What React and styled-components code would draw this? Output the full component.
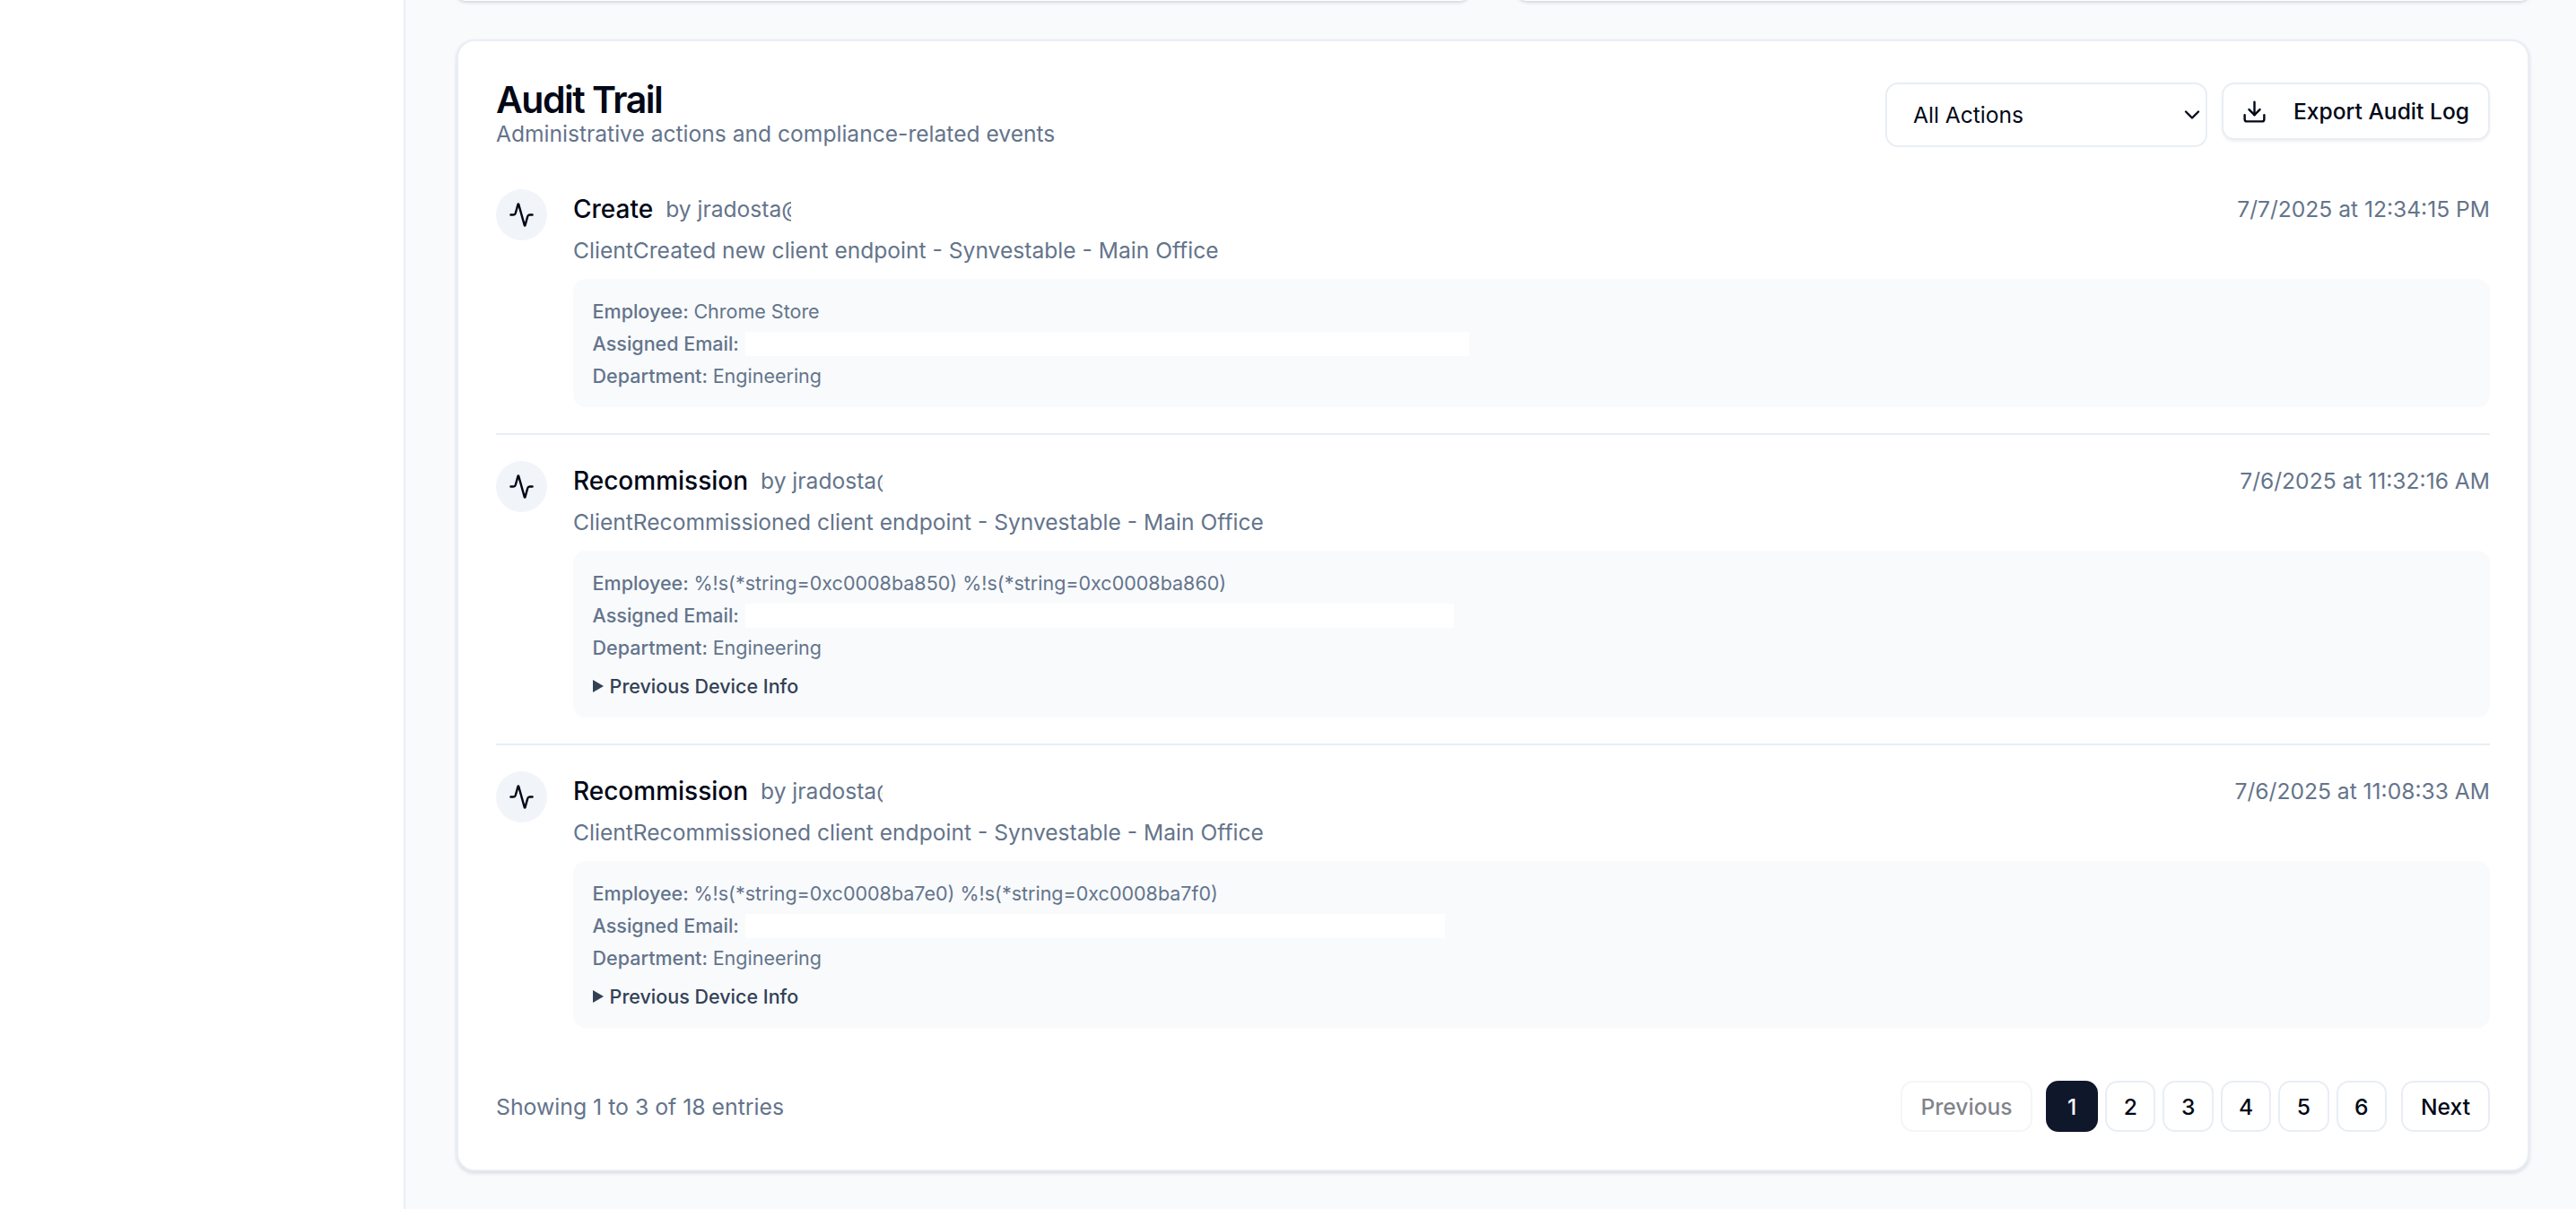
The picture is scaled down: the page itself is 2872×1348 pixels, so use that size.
import React from 'react'
import styled, { createGlobalStyle } from 'styled-components'
import { Activity, ChevronDown, Download } from 'lucide-react'

const Global = createGlobalStyle`
  html, body { margin: 0; padding: 0; height: 100%; overflow: hidden; }
  body { font-family: Inter, "Noto Sans", sans-serif; background: #f8fafc; color: #020817; }
  * { box-sizing: border-box; }
`

const Shell = styled.div`
  display: flex;
  width: 2872px;
  height: 1348px;
  overflow: hidden;
`

const Sidebar = styled.aside`
  width: 452px;
  flex: none;
  background: #fff;
  border-right: 2px solid #e9eef4;
`

const Main = styled.main`
  flex: 1;
  min-width: 0;
  padding: 0 52px 0 57px;
`

// the page is scrolled, only the bottom edge of this row is still in view
const TopCards = styled.div`
  display: grid;
  grid-template-columns: 1fr 1fr;
  gap: 54px;
  margin: -19px 0 43px;
`

const TopCard = styled.div`
  height: 20px;
  background: #fff;
  border-radius: 14px;
  box-shadow: 0 1px 4px rgba(15, 23, 42, 0.22);
`

const Card = styled.section`
  background: #fff;
  border: 2px solid #e9eef4;
  border-radius: 20px;
  padding: 46px 42px 42px;
  box-shadow: 0 2px 4px rgba(15, 23, 42, 0.14);
`

const CardHead = styled.header`
  display: flex;
  justify-content: space-between;
  align-items: flex-start;
  margin-bottom: 47px;
`

const Title = styled.h2`
  margin: 0 0 5px;
  font-size: 41px;
  line-height: 38px;
  font-weight: 600;
  letter-spacing: -1.5px;
  color: #020817;
`

const Sub = styled.p`
  margin: 0;
  font-size: 24.6px;
  line-height: 29px;
  color: #64748b;
`

const Controls = styled.div`
  display: flex;
  align-items: flex-start;
  gap: 16px;
`

const Select = styled.div`
  width: 359px;
  height: 72px;
  display: flex;
  align-items: center;
  justify-content: space-between;
  padding: 0 1px 0 29px;
  border: 2px solid #e9eef4;
  border-radius: 14px;
  font-size: 24.6px;
  color: #020817;
`

const ExportButton = styled.button`
  height: 64px;
  display: flex;
  align-items: center;
  gap: 29px;
  padding: 0 21px 0 20px;
  background: #fff;
  border: 2px solid #e9eef4;
  border-radius: 14px;
  box-shadow: 0 2px 3px rgba(15, 23, 42, 0.06);
  font: 450 24.6px Inter, sans-serif;
  white-space: nowrap;
  color: #020817;
`

const Row = styled.article`
  display: flex;
  gap: 29px;
  padding: ${p => (p.$first ? '0 0 29px' : '29px 0')};
  border-bottom: ${p => (p.$last ? 'none' : '2px solid #e9eef4')};
`

const Bubble = styled.div`
  width: 57px;
  height: 57px;
  flex: none;
  display: flex;
  align-items: center;
  justify-content: center;
  border-radius: 50%;
  background: #f1f5f9;
  color: #020817;
`

const Body = styled.div`
  flex: 1;
  min-width: 0;
  padding-top: 4px;
`

const RowTop = styled.div`
  display: flex;
  justify-content: space-between;
  align-items: center;
  height: 36px;
  margin-bottom: 10px;
`

const Who = styled.div`
  display: flex;
  align-items: center;
  gap: 14px;
`

const Action = styled.span`
  font-size: 28px;
  font-weight: 450;
  color: #020817;
`

const By = styled.span`
  width: ${p => p.$w}px;
  overflow: hidden;
  white-space: nowrap;
  font-size: 24.6px;
  color: #64748b;
`

const When = styled.span`
  font-size: 24.6px;
  color: #64748b;
`

const Desc = styled.p`
  margin: 0 0 14px;
  font-size: 24.6px;
  line-height: 36px;
  color: #64748b;
`

const Details = styled.div`
  padding: 18px 21.6px 17px;
  background: #f8fafc;
  border-radius: 14px;
  font-size: 21.5px;
  line-height: 36px;
  color: #64748b;
`

const Line = styled.div`
  display: flex;
  align-items: center;
  height: 36px;
  white-space: pre;
`

const Label = styled.span`
  font-weight: 450;
`

const Redacted = styled.span`
  display: block;
  width: ${p => p.$w}px;
  height: 27px;
  margin-left: 7px;
  background: #fff;
`

const Previous = styled.div`
  display: flex;
  align-items: center;
  gap: 7px;
  height: 36px;
  margin-top: 7px;
  font-weight: 450;
  color: #334155;
`

const Arrow = styled.span`
  width: 0;
  height: 0;
  border-style: solid;
  border-width: 7px 0 7px 12px;
  border-color: transparent transparent transparent #334155;
`

const Foot = styled.footer`
  display: flex;
  justify-content: space-between;
  align-items: center;
  margin-top: 30px;
`

const Showing = styled.span`
  font-size: 24.8px;
  color: #64748b;
`

const Pager = styled.nav`
  display: flex;
  align-items: center;
  gap: 8px;
`

const PageBtn = styled.button`
  width: ${p => p.$w || 56.4}px;
  height: 57px;
  padding: 0;
  margin: ${p => p.$margin || 0};
  background: ${p => (p.$active ? '#0f172a' : '#fff')};
  color: ${p => (p.$active ? '#f8fafc' : '#020817')};
  border: 2px solid ${p => (p.$active ? '#0f172a' : '#e9eef4')};
  border-radius: 14px;
  font: 450 24.6px Inter, sans-serif;
  opacity: ${p => (p.$disabled ? 0.5 : 1)};
`

const entries = [
  {
    action: 'Create', by: 'by jradosta@', byW: 140, when: '7/7/2025 at 12:34:15 PM',
    desc: 'ClientCreated new client endpoint - Synvestable - Main Office',
    employee: 'Chrome Store', redact: 807, prev: false,
  },
  {
    action: 'Recommission', by: 'by jradosta@', byW: 136, when: '7/6/2025 at 11:32:16 AM',
    desc: 'ClientRecommissioned client endpoint - Synvestable - Main Office',
    employee: '%!s(*string=0xc0008ba850) %!s(*string=0xc0008ba860)', redact: 790, prev: true,
  },
  {
    action: 'Recommission', by: 'by jradosta@', byW: 136, when: '7/6/2025 at 11:08:33 AM',
    desc: 'ClientRecommissioned client endpoint - Synvestable - Main Office',
    employee: '%!s(*string=0xc0008ba7e0) %!s(*string=0xc0008ba7f0)', redact: 780, prev: true,
  },
]

const App = () => {
  return (
    <>
      <Global />
      <Shell>
        <Sidebar />
        <Main>
          <TopCards>
            <TopCard />
            <TopCard />
          </TopCards>
          <Card>
            <CardHead>
              <div>
                <Title>Audit Trail</Title>
                <Sub>Administrative actions and compliance-related events</Sub>
              </div>
              <Controls>
                <Select>
                  All Actions
                  <ChevronDown size={28} strokeWidth={2} />
                </Select>
                <ExportButton>
                  <Download size={29} strokeWidth={2} />
                  Export Audit Log
                </ExportButton>
              </Controls>
            </CardHead>
            {entries.map((e, i) => (
              <Row key={e.when} $first={i === 0} $last={i === entries.length - 1}>
                <Bubble><Activity size={29} strokeWidth={2} /></Bubble>
                <Body>
                  <RowTop>
                    <Who>
                      <Action>{e.action}</Action>
                      <By $w={e.byW}>{e.by}</By>
                    </Who>
                    <When>{e.when}</When>
                  </RowTop>
                  <Desc>{e.desc}</Desc>
                  <Details>
                    <Line><Label>Employee: </Label>{e.employee}</Line>
                    <Line><Label>Assigned Email:</Label><Redacted $w={e.redact} /></Line>
                    <Line><Label>Department: </Label>Engineering</Line>
                    {e.prev && <Previous><Arrow />Previous Device Info</Previous>}
                  </Details>
                </Body>
              </Row>
            ))}
            <Foot>
              <Showing>Showing 1 to 3 of 18 entries</Showing>
              <Pager>
                <PageBtn $w={147} $disabled $margin="0 7px 0 0">Previous</PageBtn>
                <PageBtn $active $w={58}>1</PageBtn>
                {[2, 3, 4, 5, 6].map(n => <PageBtn key={n}>{n}</PageBtn>)}
                <PageBtn $w={99} $margin="0 0 0 8px">Next</PageBtn>
              </Pager>
            </Foot>
          </Card>
        </Main>
      </Shell>
    </>
  )
}

export default App
